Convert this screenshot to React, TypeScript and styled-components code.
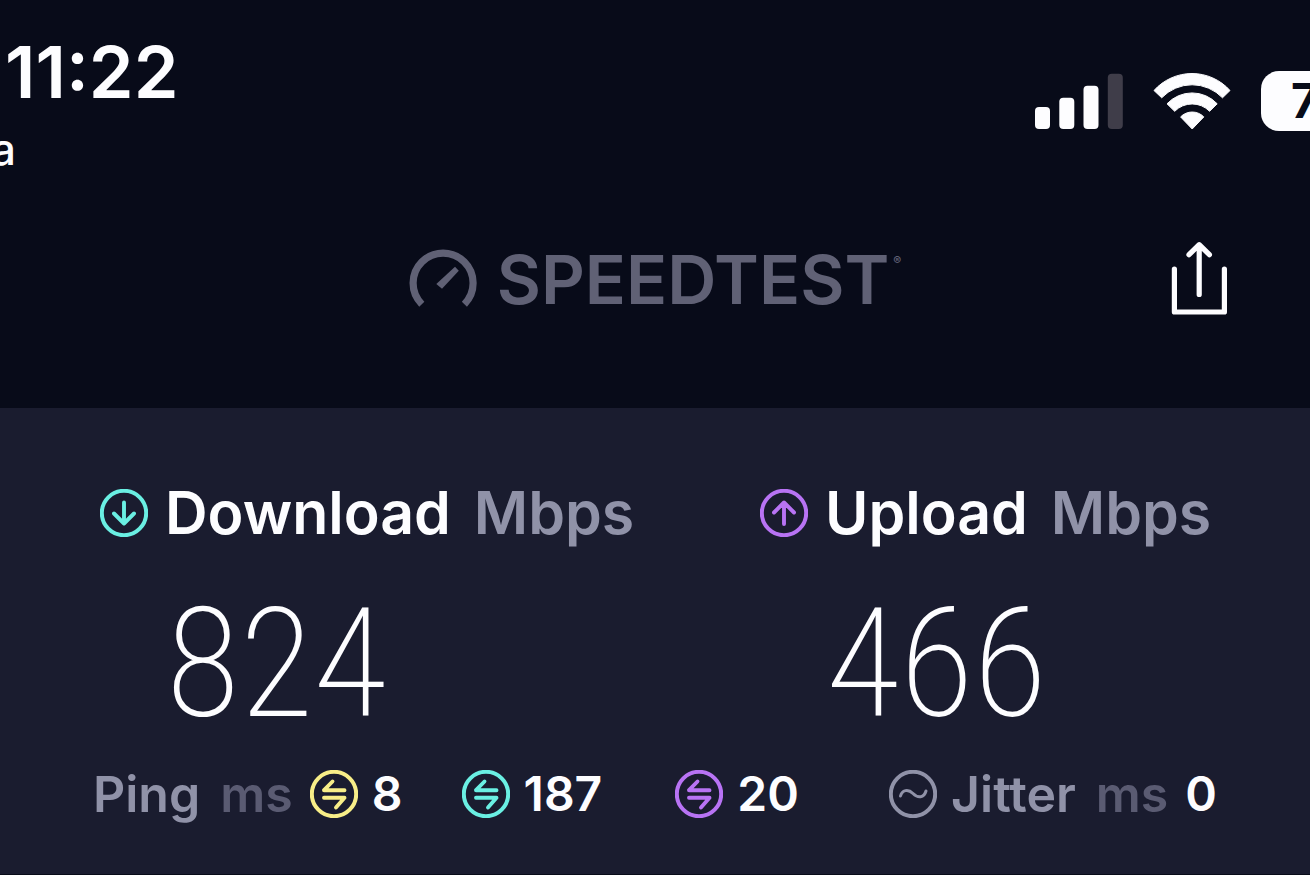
import React from 'react';
import styled, { createGlobalStyle } from 'styled-components';

const color = {
  page: '#080b19',
  panel: '#1a1c2f',
  white: '#fdfdff',
  label: '#9092a8',
  unit: '#5a5b72',
  logo: '#606175',
  download: '#6aefe3',
  upload: '#b873f4',
  ping: '#f8ee88',
};

const GlobalStyle = createGlobalStyle`
  * { box-sizing: border-box; }
  body {
    margin: 0;
    background: ${color.page};
    color: ${color.white};
    font-family: Inter, "Liberation Sans", sans-serif;
    overflow-x: hidden;
  }
`;

const Screen = styled.main`
  display: flex;
  flex-direction: column;
  min-height: 100vh;
  overflow: hidden;
`;

const StatusBar = styled.header`
  display: flex;
  justify-content: space-between;
  align-items: flex-start;
  padding-top: 36px;
`;

const ClockColumn = styled.div`
  display: flex;
  flex-direction: column;
  padding-left: 5px;
`;

const Clock = styled.time`
  font-size: 72px;
  font-weight: 600;
  line-height: 72px;
`;

const BackLabel = styled.span`
  margin: 15px 0 0 -14px;
  font-size: 44px;
  font-weight: 500;
  line-height: 52px;
`;

const Indicators = styled.div`
  display: flex;
  align-items: center;
  gap: 30px;
  padding-top: 35px;
  margin-right: -48px;
`;

const Battery = styled.div`
  width: 97px;
  padding-left: 30px;
  border-radius: 18px;
  background: ${color.white};
  color: ${color.page};
  font-size: 48px;
  font-weight: 700;
  line-height: 60px;
`;

const TitleBar = styled.div`
  display: grid;
  grid-template-columns: 1fr auto 1fr;
  align-items: center;
  padding: 66px 80px 91px;
`;

const Brand = styled.h1`
  grid-column: 2;
  display: flex;
  align-items: center;
  gap: 20px;
  margin: 0;
  color: ${color.logo};
  font-size: 68px;
  font-weight: 600;
  line-height: 76px;
`;

const BrandName = styled.span`
  display: flex;
  align-items: flex-start;
`;

const Registered = styled.sup`
  padding: 14px 0 0 4px;
  font-size: 12px;
  line-height: 12px;
`;

const ShareButton = styled.button`
  justify-self: end;
  display: flex;
  padding: 0;
  border: 0;
  background: none;
  color: ${color.white};
  cursor: pointer;
`;

const Results = styled.section`
  flex: 1;
  padding-top: 70px;
  background: ${color.panel};
  border-bottom: 1px solid ${color.page};
`;

const Speeds = styled.div`
  display: grid;
  grid-template-columns: 1fr 450px;
  padding: 0 100px;
`;

const SpeedTitle = styled.h2`
  display: flex;
  align-items: center;
  gap: 17px;
  margin: 0;
  font-size: 59px;
  font-weight: 600;
  line-height: 70px;
  white-space: nowrap;
`;

const SpeedUnit = styled.span`
  margin-left: 8px;
  color: ${color.label};
`;

const SpeedValue = styled.p`
  margin: 0;
  padding: 24px 0 0 66px;
  font-family: "Roboto Condensed", Roboto, sans-serif;
  font-size: 152px;
  font-weight: 200;
  line-height: 184px;
`;

const Latencies = styled.div`
  display: grid;
  grid-template-columns: 369fr 214fr 214fr 328fr;
  padding: 8px 93px 0;
`;

const Latency = styled.div`
  display: flex;
  align-items: center;
  gap: 14px;
  font-size: 48px;
  font-weight: 600;
  line-height: 60px;
  white-space: nowrap;
`;

const LatencyName = styled.span`
  display: flex;
  gap: 20px;
  padding-right: 3px;
  font-size: 50px;
`;

const LatencyLabel = styled.span`
  color: ${color.label};
`;

const LatencyUnit = styled.span`
  color: ${color.unit};
`;

const RingSvg = styled.svg<{ $color: string }>`
  flex: none;
  width: 48px;
  height: 48px;
  fill: none;
  stroke: ${p => p.$color};
  stroke-width: 4;
  stroke-linecap: round;
  stroke-linejoin: round;
`;

const glyphs = {
  down: 'M24 13.5V34.5M14 24.5L24 34.5L34 24.5',
  up: 'M24 35V14M14 23.5L24 13.5L34 23.5',
  swap: 'M34.5 20.2H14L22.5 11.5M14 27.8H34.5L26 37.5',
  wave: 'M11.5 26C13 20 19 18.5 24 23.5C29 28.5 35 28 37 21',
};

function RingIcon({ glyph, tint }: { glyph: keyof typeof glyphs; tint: string }) {
  return (
    <RingSvg $color={tint} viewBox="0 0 48 48" aria-hidden="true">
      <circle cx="24" cy="24" r="22.2" />
      <path d={glyphs[glyph]} strokeWidth={glyph === 'wave' ? 3 : 3.9} />
    </RingSvg>
  );
}

function Speed({ title, value, glyph, tint }: { title: string; value: number; glyph: 'down' | 'up'; tint: string }) {
  return (
    <article>
      <SpeedTitle>
        <RingIcon glyph={glyph} tint={tint} />
        <span>{title} <SpeedUnit>Mbps</SpeedUnit></span>
      </SpeedTitle>
      <SpeedValue>{value}</SpeedValue>
    </article>
  );
}

function SignalIcon() {
  return (
    <svg width="88" height="56" viewBox="0 0 88 56" fill={color.white} role="img" aria-label="Signal">
      <rect x="0" y="34" width="15" height="22" rx="4" />
      <rect x="24.3" y="24.7" width="15" height="31.3" rx="4" />
      <rect x="48.5" y="12.7" width="15" height="43.3" rx="4" />
      <rect x="72.8" y="0.7" width="15" height="55.3" rx="4" fill="#3f3d49" />
    </svg>
  );
}

function WifiIcon() {
  return (
    <svg width="78" height="57" viewBox="0 0 78 57" fill={color.white} stroke={color.white} strokeWidth="1" strokeLinejoin="round" role="img" aria-label="Wi-Fi">
      <path d="M1 17.5A51 51 0 0 1 77 17.5L69.5 24.8A42 42 0 0 0 8.7 24.8Z" />
      <path d="M14 30.8A34.4 34.4 0 0 1 64.2 30.8L56.6 38.3A24.4 24.4 0 0 0 21.7 38.3Z" />
      <path d="M27.6 43.9A16.2 16.2 0 0 1 50.8 43.9L39.2 56Z" />
    </svg>
  );
}

function GaugeIcon() {
  return (
    <svg width="68" height="60" viewBox="0 0 68 60" fill="none" aria-hidden="true">
      <path d="M12.8 55.2A30 30 0 1 1 55.4 55.2" stroke={color.logo} strokeWidth="7.2" />
      <path d="M27.3 35L33 39.8L49.8 21.7L46 17.7Z" fill={color.logo} />
    </svg>
  );
}

function ShareIcon() {
  return (
    <svg width="60" height="76" viewBox="0 0 60 76" fill="none" stroke={color.white} strokeWidth="5.2" strokeLinecap="round" strokeLinejoin="round" aria-hidden="true">
      <path d="M4.4 28V71H54.4V28" />
      <path d="M29.2 53.5V4M19 13.7L29.2 3.7L39.4 13.7" />
    </svg>
  );
}

export default function App() {
  return (
    <Screen>
      <GlobalStyle />
      <StatusBar>
        <ClockColumn>
          <Clock>11:22</Clock>
          <BackLabel>a</BackLabel>
        </ClockColumn>
        <Indicators>
          <SignalIcon />
          <WifiIcon />
          <Battery>7</Battery>
        </Indicators>
      </StatusBar>
      <TitleBar>
        <Brand>
          <GaugeIcon />
          <BrandName>SPEEDTEST<Registered>®</Registered></BrandName>
        </Brand>
        <ShareButton type="button" aria-label="Share result">
          <ShareIcon />
        </ShareButton>
      </TitleBar>
      <Results>
        <Speeds>
          <Speed title="Download" value={824} glyph="down" tint={color.download} />
          <Speed title="Upload" value={466} glyph="up" tint={color.upload} />
        </Speeds>
        <Latencies>
          <Latency>
            <LatencyName>
              <LatencyLabel>Ping</LatencyLabel>
              <LatencyUnit>ms</LatencyUnit>
            </LatencyName>
            <RingIcon glyph="swap" tint={color.ping} />
            <span>8</span>
          </Latency>
          <Latency>
            <RingIcon glyph="swap" tint={color.download} />
            <span>187</span>
          </Latency>
          <Latency>
            <RingIcon glyph="swap" tint={color.upload} />
            <span>20</span>
          </Latency>
          <Latency>
            <RingIcon glyph="wave" tint={color.label} />
            <LatencyName>
              <LatencyLabel>Jitter</LatencyLabel>
              <LatencyUnit>ms</LatencyUnit>
            </LatencyName>
            <span>0</span>
          </Latency>
        </Latencies>
      </Results>
    </Screen>
  );
}
